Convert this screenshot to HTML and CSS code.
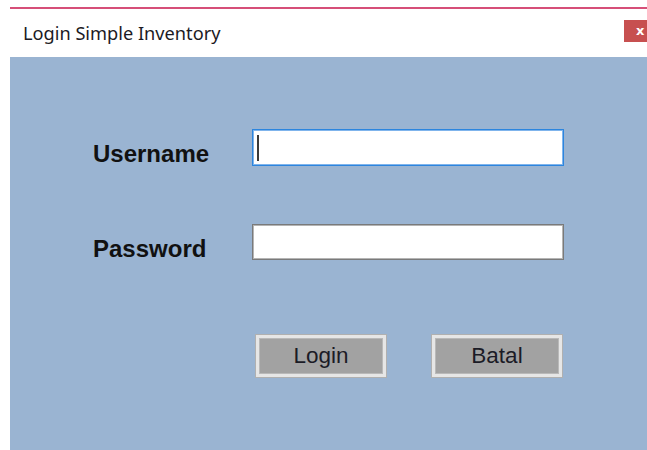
FILE: index.html
```html
<!DOCTYPE html>
<html lang="id">
<head>
<meta charset="utf-8">
<title>Login Simple Inventory</title>
<link rel="stylesheet" href="styles.css">
</head>
<body>
  <div class="window">
    <div class="titlebar">
      <span class="title">Login Simple Inventory</span>
      <button class="close" type="button">x</button>
    </div>
    <div class="panel">
      <div class="row">
        <label class="label">Username</label>
        <div class="field focused"><span class="caret"></span></div>
      </div>
      <div class="row row-second">
        <label class="label">Password</label>
        <div class="field"></div>
      </div>
      <div class="actions">
        <button class="btn" type="button">Login</button>
        <button class="btn" type="button">Batal</button>
      </div>
    </div>
  </div>
</body>
</html>
```

FILE: styles.css
```css
html, body {
  margin: 0;
  padding: 0;
  background: #ffffff;
  overflow: hidden;
}

body {
  width: 647px;
  height: 450px;
}

.window {
  margin: 7px 0 0 10px;
  width: 660px;
  border-top: 2px solid #d64f78;
  display: flex;
  flex-direction: column;
  height: 441px;
}

.titlebar {
  height: 48px;
  display: flex;
  align-items: flex-start;
  background: #ffffff;
}

.title {
  margin: 12px 0 0 13px;
  font-family: "Noto Sans", "Open Sans", sans-serif;
  font-size: 18.2px;
  line-height: 24px;
  color: #1c1a24;
  flex: 1;
}

.close {
  margin: 11px 10px 0 0;
  width: 36px;
  height: 22px;
  border: none;
  padding: 0 0 0 12px;
  background: #c75050;
  color: #ffffff;
  font-family: "DejaVu Sans", sans-serif;
  font-weight: bold;
  font-size: 13px;
  line-height: 20px;
  text-align: left;
}

.panel {
  flex: 1;
  background: #9ab4d2;
  padding: 72px 0 0 83px;
}

.row {
  display: flex;
  align-items: flex-start;
}

.row-second {
  margin-top: 58px;
}

.label {
  width: 159px;
  padding-top: 13px;
  font-family: "Liberation Sans", Arial, sans-serif;
  font-weight: bold;
  font-size: 24px;
  line-height: 24px;
  color: #111111;
}

.field {
  box-sizing: border-box;
  width: 312px;
  height: 36px;
  background: #ffffff;
  border: 1px solid #7a7a7a;
  box-shadow: inset 0 0 0 1px #b4b4b4;
  padding: 5px 0 0 4px;
}

.field.focused {
  height: 37px;
  border-color: #2c85de;
  box-shadow: inset 0 0 0 1px #7fb4ec;
}

.caret {
  display: block;
  width: 2px;
  height: 26px;
  background: #3a3a3a;
}

.actions {
  display: flex;
  gap: 44px;
  margin: 73px 0 0 162px;
}

.btn {
  box-sizing: border-box;
  width: 132px;
  height: 44px;
  border: 1px solid #b0b0b0;
  background: #a2a2a2;
  box-shadow: inset 0 0 0 3px #e6e6e6, inset 0 0 0 4px #b9b9b9;
  font-family: "Liberation Sans", Arial, sans-serif;
  font-size: 22.5px;
  color: #1b1b26;
  padding: 0;
  line-height: 40px;
}
```
